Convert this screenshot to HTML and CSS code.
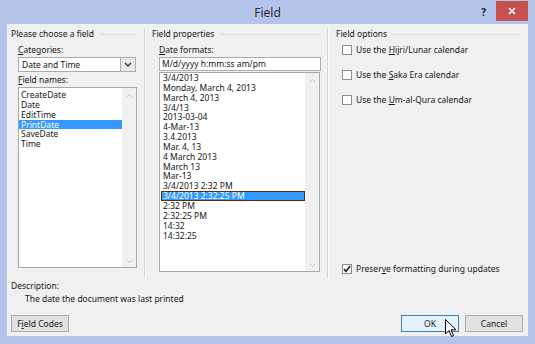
FILE: index.html
```html
<!DOCTYPE html>
<html>
<head>
<meta charset="utf-8">
<link rel="stylesheet" href="styles.css">
</head>
<body>
<div class="window">
  <div class="titlebar">
    <span></span>
    <span class="title">Field</span>
    <div class="controls">
      <span class="help">?</span>
      <span class="close"><svg width="8" height="8" viewBox="0 0 8 8"><path d="M1 1L7 7M7 1L1 7" stroke="#fff" stroke-width="1.6"/></svg></span>
    </div>
  </div>
  <div class="content">
    <div class="columns">
      <section class="col col1">
        <div class="heading">Please choose a field</div>
        <div class="body">
          <div class="label"><u>C</u>ategories:</div>
          <div class="combo">
            <span class="combo-text">Date and Time</span>
            <span class="combo-btn"><svg width="8" height="5" viewBox="0 0 8 5"><path d="M1 1L4 4L7 1" fill="none" stroke="#333" stroke-width="1.3"/></svg></span>
          </div>
          <div class="label mt"><u>F</u>ield names:</div>
          <div class="listbox names">
            <div class="items">
              <div class="item">CreateDate</div>
              <div class="item">Date</div>
              <div class="item">EditTime</div>
              <div class="item sel">PrintDate</div>
              <div class="item">SaveDate</div>
              <div class="item">Time</div>
            </div>
            <div class="scroll">
              <svg width="7" height="5" viewBox="0 0 7 5"><path d="M1 4L3.5 1.5L6 4" fill="none" stroke="#c4c4c4" stroke-width="1"/></svg>
              <svg width="7" height="5" viewBox="0 0 7 5"><path d="M1 1L3.5 3.5L6 1" fill="none" stroke="#c4c4c4" stroke-width="1"/></svg>
            </div>
          </div>
        </div>
      </section>
      <div class="sep"></div>
      <section class="col col2">
        <div class="heading">Field properties</div>
        <div class="body">
          <div class="label"><u>D</u>ate formats:</div>
          <div class="input">M/d/yyyy h:mm:ss am/pm</div>
          <div class="listbox formats">
            <div class="items">
              <div class="item">3/4/2013</div>
              <div class="item">Monday, March 4, 2013</div>
              <div class="item">March 4, 2013</div>
              <div class="item">3/4/13</div>
              <div class="item">2013-03-04</div>
              <div class="item">4-Mar-13</div>
              <div class="item">3.4.2013</div>
              <div class="item">Mar. 4, 13</div>
              <div class="item">4 March 2013</div>
              <div class="item">March 13</div>
              <div class="item">Mar-13</div>
              <div class="item">3/4/2013 2:32 PM</div>
              <div class="item sel focus">3/4/2013 2:32:25 PM</div>
              <div class="item">2:32 PM</div>
              <div class="item">2:32:25 PM</div>
              <div class="item">14:32</div>
              <div class="item">14:32:25</div>
            </div>
            <div class="scroll">
              <svg width="7" height="5" viewBox="0 0 7 5"><path d="M1 4L3.5 1.5L6 4" fill="none" stroke="#c4c4c4" stroke-width="1"/></svg>
              <svg width="7" height="5" viewBox="0 0 7 5"><path d="M1 1L3.5 3.5L6 1" fill="none" stroke="#c4c4c4" stroke-width="1"/></svg>
            </div>
          </div>
        </div>
      </section>
      <div class="sep"></div>
      <section class="col col3">
        <div class="heading">Field options</div>
        <div class="body opts">
          <label class="check"><span class="box"></span><span>Use the <u>H</u>ijri/Lunar calendar</span></label>
          <label class="check"><span class="box"></span><span>Use the <u>S</u>aka Era calendar</span></label>
          <label class="check"><span class="box"></span><span>Use the <u>U</u>m-al-Qura calendar</span></label>
          <label class="check last"><span class="box"><svg width="8" height="8" viewBox="0 0 8 8"><path d="M1 4L3 6.5L7 1" fill="none" stroke="#222" stroke-width="1.6"/></svg></span><span>Preser<u>v</u>e formatting during updates</span></label>
        </div>
      </section>
    </div>
    <div class="desc">
      <div class="desc-label">Description:</div>
      <div class="desc-text">The date the document was last printed</div>
    </div>
    <div class="buttons">
      <span class="btn">F<u>i</u>eld Codes</span>
      <span class="spacer"></span>
      <span class="btn default">OK</span>
      <span class="btn">Cancel</span>
    </div>
  </div>
  <svg class="cursor" width="12" height="19" viewBox="0 0 12 19"><path d="M0.5 0.5L0.5 15L4 11.5L6.5 17.5L8.5 16.5L6 10.8L11 10.8Z" fill="#fff" stroke="#000" stroke-width="1"/></svg>
</div>
</body>
</html>
```

FILE: styles.css
```css
* { box-sizing: border-box; }
html, body { margin: 0; padding: 0; }
body {
  font-family: "Noto Sans", "Open Sans", sans-serif;
  font-size: 8.5px;
  color: #161616;
}
u { text-decoration: underline; text-underline-offset: 1px; }
.window {
  position: relative;
  width: 535px;
  height: 344px;
  background: #b4c4ea;
  padding: 0 7px 8px 7px;
  display: flex;
  flex-direction: column;
}
.titlebar {
  height: 24px;
  display: grid;
  grid-template-columns: 1fr auto 1fr;
  align-items: start;
}
.title {
  font-size: 12px;
  color: #2b2b2b;
  line-height: 26px;
}
.controls {
  display: flex;
  justify-content: flex-end;
  align-items: flex-start;
}
.help {
  font-size: 10px;
  font-weight: bold;
  color: #222;
  line-height: 25px;
  margin-right: 10px;
}
.close {
  width: 32px;
  height: 20px;
  margin-top: 1px;
  background: #c75050;
  display: flex;
  align-items: center;
  justify-content: center;
}
.content {
  flex: 1;
  background: #f0f0f0;
  display: flex;
  flex-direction: column;
}
.columns {
  height: 254px;
  display: flex;
}
.sep {
  width: 1px;
  margin-top: 4px;
  background: #d5d5d5;
  box-shadow: 1px 0 0 #fbfbfb;
}
.col {
  display: flex;
  flex-direction: column;
  padding-top: 4px;
}
.col1 { width: 137px; padding-left: 4px; padding-right: 8px; }
.col2 { width: 182px; padding-left: 7px; padding-right: 6px; }
.col3 { flex: 1; padding-left: 8px; padding-right: 8px; }
.heading {
  height: 12px;
  line-height: 12px;
  display: flex;
  align-items: center;
  white-space: nowrap;
}
.heading::after {
  content: "";
  flex: 1;
  height: 1px;
  background: #dddddd;
  margin-left: 6px;
}
.body { display: flex; flex-direction: column; }
.col1 .body { padding-left: 7px; }
.col2 .body { padding-left: 7px; }
.col3 .body { padding-left: 6px; flex: 1; }
.label {
  height: 12px;
  line-height: 12px;
  margin-top: 4px;
  margin-bottom: 1px;
}
.label.mt { margin-top: 2px; }
.combo {
  height: 15px;
  border: 1px solid #acacac;
  background: #fff;
  display: flex;
  align-items: stretch;
}
.combo-text { flex: 1; padding-left: 3px; line-height: 13px; }
.combo-btn {
  width: 15px;
  border-left: 1px solid #acacac;
  background: #e8e8e8;
  display: flex;
  align-items: center;
  justify-content: center;
}
.input {
  height: 14px;
  border: 1px solid #abadb3;
  background: #fff;
  line-height: 12px;
  padding-left: 2px;
  margin-bottom: 1px;
}
.listbox {
  border: 1px solid #a8a8a8;
  background: #fff;
  display: flex;
}
.names { height: 181px; width: 119px; }
.formats { height: 200px; width: 161px; }
.items { flex: 1; display: flex; flex-direction: column; }
.names .items { padding-top: 2px; }
.formats .items { padding-top: 0px; padding-left: 1px; }
.item {
  height: 9.85px;
  line-height: 9.85px;
  padding-left: 2px;
  white-space: nowrap;
}
.item.sel { background: #3399ff; color: #fff; }
.item.focus { outline: 1px solid #5a2e12; outline-offset: -1px; }
.scroll {
  width: 14px;
  background: #f0f0f0;
  display: flex;
  flex-direction: column;
  justify-content: space-between;
  align-items: center;
  padding: 5px 0 3px;
}
.opts { display: flex; flex-direction: column; }
.check {
  height: 12px;
  line-height: 12px;
  display: flex;
  align-items: center;
  margin-top: 4px;
  margin-bottom: 9px;
  white-space: nowrap;
}
.check.last { margin-top: auto; margin-bottom: 3px; }
.box {
  width: 10px;
  height: 10px;
  border: 1px solid #8d8d8d;
  background: #fdfdfd;
  margin-right: 4px;
  display: flex;
  align-items: center;
  justify-content: center;
}
.desc { padding: 2px 0 0 4px; }
.desc-label { height: 12px; line-height: 12px; }
.desc-text { height: 12px; line-height: 12px; padding-left: 14px; margin-top: 1px; }
.buttons {
  display: flex;
  margin-top: 10px;
  padding: 0 5px 0 4px;
  gap: 6px;
}
.spacer { flex: 1; }
.btn {
  width: 58px;
  height: 17px;
  line-height: 15px;
  text-align: center;
  border: 1px solid #adadad;
  background: #e1e1e1;
}
.btn.default {
  border-color: #3c7fb1;
  background: #e5f1fb;
}
.cursor {
  position: absolute;
  left: 445px;
  top: 319px;
}
```
